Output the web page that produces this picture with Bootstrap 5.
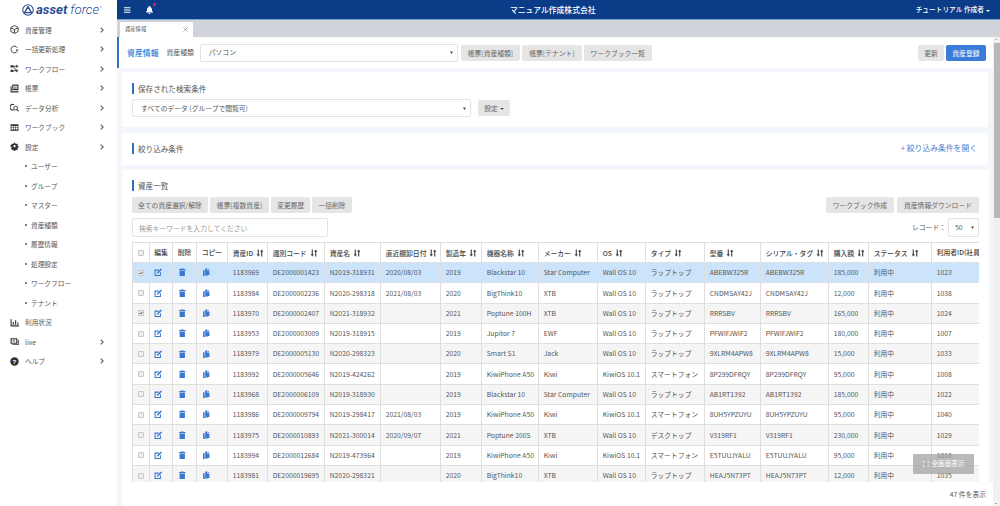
<!DOCTYPE html>
<html lang="ja">
<head>
<meta charset="utf-8">
<title>資産情報</title>
<link href="https://cdn.jsdelivr.net/npm/bootstrap@5.3.0/dist/css/bootstrap.min.css" rel="stylesheet">
<style>
html,body{height:100%;overflow:hidden}
body{font-family:"Noto Sans CJK JP","Noto Sans",sans-serif;font-size:7px;color:#555;background:#fff}
.app-shell{height:100vh}
.side-pane{width:117px;flex:0 0 117px;background:#fff}
.brand-row{height:20px;padding-left:22px;color:#2b4c94}
.brand-row svg{width:12px;height:12px;margin-right:2px}
.brand-a{font-family:Roboto,sans-serif;font-style:italic;font-weight:700;font-size:13.2px;line-height:20px}
.brand-f{font-family:Roboto,sans-serif;font-style:italic;font-weight:300;font-size:13.2px;line-height:20px;margin-left:3px}
.brand-r{font-size:3px;margin-left:1px;margin-top:-3px}
.side-item{height:19.5px;padding:0 13px 0 10px;color:#555;font-size:6.7px;text-decoration:none}
.side-item .ico{width:9px;height:9px;margin-right:6px;fill:#333;flex:none}
.side-item .chev{width:4px;height:6px;fill:none;stroke:#666;stroke-width:1.2;flex:none}
.side-sub{padding-left:25px}
.side-sub::before{content:"";width:2px;height:2px;border-radius:50%;background:#555;margin-right:4px}
.work-pane,.work-col{min-width:0}
.top-bar{height:20px;flex:none;background:#0b3c87;border-bottom:1px solid #7da3d3;color:#fff;padding:0 10px 0 7px;position:relative}
.top-bar svg{fill:#fff}
.burger{width:6.5px;height:6px;margin-right:15px}
.bell{width:7px;height:8px}
.bell-dot{position:absolute;left:36px;top:3px;width:3px;height:3px;border-radius:50%;background:#e0245e}
.co-name{font-size:7.8px;font-weight:500;position:absolute;left:393px;top:4px}
.who{font-size:6.7px;font-weight:500}
.who::after{content:"";display:inline-block;border:2px solid transparent;border-top-color:#fff;border-bottom:0;margin-left:2px;vertical-align:middle}
.tab-strip{height:17px;flex:none;background:#d0d4da;padding:2px 0 0 3px}
.tab-one{width:73px;height:15px;background:#fff;padding:0 5px;font-size:5.3px;color:#555;border-radius:1px 1px 0 0}
.tab-x{width:5px;height:5px;stroke:#888;stroke-width:.7;fill:none}
.page-bg{background:#f3f6fb;min-height:0}
.page-flow{min-height:0;overflow:hidden}
.head-panel{height:31px;flex:none;background:#fff;border-left:2px solid #2f6fc4;padding:0 7px 0 8px}
.head-title{font-size:7.9px;font-weight:500;color:#2f76d2;margin-right:8px}
.head-label{font-size:6.8px;margin-right:6px}
.card-block{background:#fff;margin:0 5px;padding:0 10px;flex:none}
.save-panel{height:55px;margin-top:4px;padding-top:11px}
.filter-panel{height:32px;margin-top:6px;padding-bottom:2px}
.list-panel{flex:1 1 0;min-height:0;overflow:hidden;padding-top:10px;margin-top:5px;margin-right:4px}
.sec-title{border-left:2px solid #2f6fc4;padding-left:4px;height:11px;line-height:11px;font-size:7.6px;color:#555}
.btn-run{gap:2px}
.btn-run3{gap:3px}
.grey-btn{background:#e5e5e5;color:#666;font-size:6.8px;height:16px;line-height:16px;padding:0 6px;border:0;border-radius:2px;white-space:nowrap}
.grey-btn:hover{background:#ddd;color:#666}
.wider-btn{padding:0 7px}
.blue-btn{background:#3a7cd8;color:#fff;font-size:6.8px;height:16px;line-height:16px;padding:0 6.5px;border:0;border-radius:2px}
.pick-box{height:18px;min-height:0;font-size:6.8px;color:#555;padding:0 8px;border:1px solid #e4e4e4;border-radius:2px;background-size:7px 7px;background-position:right 2px center;background-image:url("data:image/svg+xml,%3Csvg xmlns='http://www.w3.org/2000/svg' viewBox='0 0 7 7'%3E%3Cpath d='M2 2.500h3L3.500 5z' fill='%23444'/%3E%3C/svg%3E")}
.pick-kind{width:258px;margin-right:3px}
.pick-saved{width:339px;margin-right:7px}
.pick-count{width:31px;height:19px;padding-left:6px}
.gear-btn{width:32px;padding:0}
.gear-btn::after{content:"";display:inline-block;border:2px solid transparent;border-top-color:#555;border-bottom:0;margin-left:2px;vertical-align:middle}
.open-link{font-size:7.8px;color:#4a80cb;text-decoration:none;margin-right:1px}
.select-row{margin-top:5px}
.tool-row{margin-top:6px;margin-bottom:5px}
.key-box{width:196px;height:19px;min-height:0;font-size:6.8px;padding:0 6px;border:1px solid #e4e4e4;border-radius:2px}
.key-box::placeholder{color:#999}
.rec-label{font-size:6.8px;margin-right:2px}
.grid-wrap{overflow:hidden;margin-top:5px}
.asset-grid{table-layout:fixed;width:890px;margin:0;font-size:6.8px;--bs-table-striped-bg:#f5f5f5;--bs-table-border-color:#dfdfdf;--bs-table-color:#555;--bs-table-striped-color:#555;border-collapse:collapse}
.asset-grid th,.asset-grid td{padding:0 4.7px;height:20.3px;line-height:1;vertical-align:middle;white-space:nowrap;overflow:hidden;color:#555;border-color:#dfdfdf}
.asset-grid th{font-weight:500;color:#444;height:20px}
.asset-grid col:nth-child(1){width:16.5px}
.asset-grid col:nth-child(2){width:23.5px}
.asset-grid col:nth-child(3){width:24px}
.asset-grid col:nth-child(4){width:31px}
.asset-grid col:nth-child(5){width:40px}
.asset-grid col:nth-child(6){width:57px}
.asset-grid col:nth-child(7){width:56px}
.asset-grid col:nth-child(8){width:60px}
.asset-grid col:nth-child(9){width:41px}
.asset-grid col:nth-child(10){width:57px}
.asset-grid col:nth-child(11){width:59px}
.asset-grid col:nth-child(12){width:48px}
.asset-grid col:nth-child(13){width:59px}
.asset-grid col:nth-child(14){width:56px}
.asset-grid col:nth-child(15){width:68px}
.asset-grid col:nth-child(16){width:40px}
.asset-grid col:nth-child(17){width:63px}
.asset-grid col:nth-child(18){width:91px}
.asset-grid tr.row-picked>td{background:#cbe4fb!important;box-shadow:none!important}
.tick{appearance:none;-webkit-appearance:none;width:6px;height:6px;margin:0 0 0 .5px;display:block;background:#eee;border:.6px solid #c8c8c8;border-radius:1px}
.tick:checked{background:#e8e8e8 url("data:image/svg+xml,%3Csvg xmlns='http://www.w3.org/2000/svg' viewBox='0 0 6 6'%3E%3Cpath d='M1 3l1.500 1.500L5 1.500' fill='none' stroke='%23333' stroke-width='1.200'/%3E%3C/svg%3E") center/100% 100% no-repeat}
.act{width:8.5px;height:8.5px;fill:#3a78d0;display:block}
.sort-ico{width:8px;height:8px;fill:#444;margin-left:3px;vertical-align:-1px}
.foot-line{height:24px;flex:none;background:#fff;margin-left:5px;padding-right:7px;font-size:6.8px}
.fake-scroll{width:7px;flex:none;background:#f1f1f1;position:relative}
.fake-thumb{position:absolute;left:1px;right:0;top:6px;height:175px;background:#b8b8b8}
.arrow-up,.arrow-down{position:absolute;left:2px;border:1.5px solid transparent}
.arrow-up{top:2px;border-bottom-color:#777;border-top:0}
.arrow-down{bottom:2px;border-top-color:#555;border-bottom:0}
.wide-btn{position:absolute;left:913px;top:454px;width:61px;height:20px;background:rgba(160,160,160,.72);color:#fff;font-size:6.6px;border-radius:1px;z-index:5}
.wide-btn svg{width:6px;height:6px;margin-right:3px;stroke:#fff;fill:none;stroke-width:1}
</style>
</head>
<body>
<svg width="0" height="0" class="d-none">
<symbol id="i-edit" viewBox="0 0 16 16"><path d="M1 3h9l-2 2H3v8h8V9l2-2v8H1z"/><path d="M6 8l7-7 2 2-7 7-3 1z"/></symbol>
<symbol id="i-trash" viewBox="0 0 16 16"><path d="M6 1h4l1 1h3v2H2V2h3zM3 5h10v10H3z"/></symbol>
<symbol id="i-copy" viewBox="0 0 16 16"><path d="M6 1h4v4h4v8H6z"/><path d="M11 1l3 3h-3zM2 4h3v10h6v1H2z"/></symbol>
<symbol id="i-sort" viewBox="0 0 14 14"><path d="M3 1h2v8h2L4 13 1 9h2zM9 13h2V5h2l-3-4-3 4h2z"/></symbol>
<symbol id="i-chev" viewBox="0 0 4 6"><path d="M.7.6 3.2 3 .7 5.4"/></symbol>
</svg>
<div class="app-shell d-flex">
  <aside class="side-pane d-flex flex-column">
    <div class="brand-row d-flex align-items-center">
      <svg viewBox="0 0 16 16"><circle cx="8" cy="8" r="7" fill="none" stroke="#2b4c94" stroke-width="1.5"/><path d="M8 3.500 12.500 11.500H3.500z" fill="none" stroke="#2b4c94" stroke-width="1.800" stroke-linejoin="round"/></svg>
      <span class="brand-a">asset</span><span class="brand-f">force</span><span class="brand-r">®</span>
    </div>
    <a class="side-item d-flex align-items-center" href="#"><svg class="ico" viewBox="0 0 16 16"><path d="M8 1l6.500 3.500v7L8 15l-6.500-3.500v-7z" fill="none" stroke="#333" stroke-width="1.600"/><path d="M2 5l6 3 6-3M8 8v6" fill="none" stroke="#333" stroke-width="1.600"/></svg><span class="flex-grow-1">資産管理</span><svg class="chev"><use href="#i-chev"/></svg></a>
    <a class="side-item d-flex align-items-center" href="#"><svg class="ico" viewBox="0 0 16 16"><path d="M13 11A6 6 0 1 1 13 5" fill="none" stroke="#333" stroke-width="1.600"/><path d="M10 8h5l-2.500 3z"/></svg><span class="flex-grow-1">一括更新処理</span><svg class="chev"><use href="#i-chev"/></svg></a>
    <a class="side-item d-flex align-items-center" href="#"><svg class="ico" viewBox="0 0 16 16"><path d="M1 2h5v4H1zM1 10h5v4H1zM11 1l4 3-4 3zM11 9l4 3-4 3z"/><path d="M6 4h5M6 12h5M6 4l5 8" stroke="#333" stroke-width="1.500" fill="none"/></svg><span class="flex-grow-1">ワークフロー</span><svg class="chev"><use href="#i-chev"/></svg></a>
    <a class="side-item d-flex align-items-center" href="#"><svg class="ico" viewBox="0 0 16 16"><path d="M4 1h11v10H4zM6 3v6h7V3zM1 4h2v9h12v2H1z" fill-rule="evenodd"/><path d="M7 5h5v1H7zM7 7h5v1H7z"/></svg><span class="flex-grow-1">帳票</span><svg class="chev"><use href="#i-chev"/></svg></a>
    <a class="side-item d-flex align-items-center" href="#"><svg class="ico" viewBox="0 0 16 16"><path d="M7 3a5 5 0 1 0 0 9" fill="none" stroke="#333" stroke-width="2"/><circle cx="10" cy="9" r="3.300" fill="none" stroke="#333" stroke-width="1.600"/><path d="M12 11.500l3 3" stroke="#333" stroke-width="2"/></svg><span class="flex-grow-1">データ分析</span><svg class="chev"><use href="#i-chev"/></svg></a>
    <a class="side-item d-flex align-items-center" href="#"><svg class="ico" viewBox="0 0 16 16"><path d="M1 2h14v12H1zM2.500 5.500v2h3v-2zM6.500 5.500v2h3v-2zM10.500 5.500v2h3v-2zM2.500 8.500v2h3v-2zM6.500 8.500v2h3v-2zM10.500 8.500v2h3v-2zM2.500 11.500v1.500h3v-1.500zM6.500 11.500v1.500h3v-1.500zM10.500 11.500v1.500h3v-1.500z" fill-rule="evenodd"/></svg><span class="flex-grow-1">ワークブック</span><svg class="chev"><use href="#i-chev"/></svg></a>
    <a class="side-item d-flex align-items-center" href="#"><svg class="ico" viewBox="0 0 16 16"><path d="M6.500 0h3l.5 2.200 1.500.6 1.900-1.200 2.100 2.100-1.200 1.900.6 1.500 2.100.4v3l-2.100.5-.6 1.500 1.200 1.900-2.100 2.100-1.900-1.200-1.500.6-.5 2.100h-3l-.5-2.100-1.500-.6-1.900 1.200L.5 12.300l1.200-1.900-.6-1.500L-1 8.500v-3l2.100-.4.6-1.500L.5 3.700 2.600 1.600l1.900 1.200 1.500-.6zM8 5a2.500 2.500 0 1 0 0 5 2.500 2.500 0 0 0 0-5z" fill-rule="evenodd" transform="translate(1.500 1.200) scale(.82)"/></svg><span class="flex-grow-1">設定</span><svg class="chev"><use href="#i-chev"/></svg></a>
    <a class="side-item side-sub d-flex align-items-center" href="#">ユーザー</a>
    <a class="side-item side-sub d-flex align-items-center" href="#">グループ</a>
    <a class="side-item side-sub d-flex align-items-center" href="#">マスター</a>
    <a class="side-item side-sub d-flex align-items-center" href="#">資産種類</a>
    <a class="side-item side-sub d-flex align-items-center" href="#">履歴情報</a>
    <a class="side-item side-sub d-flex align-items-center" href="#">処理設定</a>
    <a class="side-item side-sub d-flex align-items-center" href="#">ワークフロー</a>
    <a class="side-item side-sub d-flex align-items-center" href="#">テナント</a>
    <a class="side-item d-flex align-items-center" href="#"><svg class="ico" viewBox="0 0 16 16"><path d="M1 2h2v11h13v2H1zM5 7h2v5H5zM9 4h2v8H9zM13 8h2v4h-2z"/></svg><span class="flex-grow-1">利用状況</span></a>
    <a class="side-item d-flex align-items-center" href="#"><svg class="ico" viewBox="0 0 16 16"><path d="M1 2h12v10H1zM3 4v6h8V4zM5 5h4v1H5zM5 7h4v1H5zM14 5h1.500v9H4v-1h10z" fill-rule="evenodd"/></svg><span class="flex-grow-1">live</span><svg class="chev"><use href="#i-chev"/></svg></a>
    <a class="side-item d-flex align-items-center" href="#"><svg class="ico" viewBox="0 0 16 16"><circle cx="8" cy="8" r="7.500"/><text x="8" y="12" text-anchor="middle" font-size="11" font-weight="700" fill="#fff" font-family="Liberation Sans">?</text></svg><span class="flex-grow-1">ヘルプ</span><svg class="chev"><use href="#i-chev"/></svg></a>
  </aside>
  <div class="work-pane flex-grow-1 d-flex flex-column">
    <header class="top-bar d-flex align-items-center">
      <svg class="burger" viewBox="0 0 7 6"><path d="M0 0h7v1H0zM0 2.500h7v1H0zM0 5h7v1H0z"/></svg>
      <svg class="bell" viewBox="0 0 14 16"><path d="M7 0a1.500 1.500 0 0 1 1.500 2C11 2.700 12 5 12 8c0 2 .8 3 2 4v1H0v-1c1.200-1 2-2 2-4 0-3 1-5.300 3.500-6A1.500 1.500 0 0 1 7 0zM5 14h4a2 2 0 0 1-4 0z"/></svg>
      <span class="bell-dot"></span>
      <span class="co-name">マニュアル作成株式会社</span>
      <span class="who ms-auto">チュートリアル 作成者</span>
    </header>
    <div class="tab-strip d-flex">
      <div class="tab-one d-flex align-items-center justify-content-between"><span>資産情報</span><svg class="tab-x" viewBox="0 0 5 5"><path d="M.5.500l4 4M4.500.500l-4 4"/></svg></div>
    </div>
    <div class="page-bg flex-grow-1 d-flex">
      <div class="work-col flex-grow-1 d-flex flex-column">
        <div class="page-flow flex-grow-1 d-flex flex-column">
          <section class="head-panel d-flex align-items-center">
            <span class="head-title">資産情報</span>
            <span class="head-label">資産種類</span>
            <select class="form-select pick-box pick-kind"><option>パソコン</option></select>
            <div class="d-flex btn-run">
              <button class="btn grey-btn wider-btn">帳票[資産種類]</button>
              <button class="btn grey-btn wider-btn">帳票[テナント]</button>
              <button class="btn grey-btn wider-btn">ワークブック一覧</button>
            </div>
            <div class="d-flex btn-run ms-auto">
              <button class="btn grey-btn">更新</button>
              <button class="btn blue-btn">資産登録</button>
            </div>
          </section>
          <section class="card-block save-panel">
            <div class="sec-title">保存された検索条件</div>
            <div class="d-flex align-items-center select-row">
              <select class="form-select pick-box pick-saved"><option>すべてのデータ (グループで閲覧可)</option></select>
              <button class="btn grey-btn gear-btn">設定</button>
            </div>
          </section>
          <section class="card-block filter-panel d-flex align-items-center justify-content-between">
            <div class="sec-title">絞り込み条件</div>
            <a class="open-link" href="#">+ 絞り込み条件を開く</a>
          </section>
          <section class="card-block list-panel">
            <div class="sec-title">資産一覧</div>
            <div class="d-flex tool-row">
              <div class="d-flex btn-run">
                <button class="btn grey-btn">全ての資産選択/解除</button>
                <button class="btn grey-btn wider-btn">帳票[複数資産]</button>
                <button class="btn grey-btn">変更履歴</button>
                <button class="btn grey-btn">一括削除</button>
              </div>
              <div class="d-flex btn-run3 ms-auto">
                <button class="btn grey-btn wider-btn">ワークブック作成</button>
                <button class="btn grey-btn wider-btn">資産情報ダウンロード</button>
              </div>
            </div>
            <div class="d-flex align-items-center justify-content-between">
              <input class="form-control key-box" placeholder="検索キーワードを入力してください">
              <div class="d-flex align-items-center">
                <span class="rec-label">レコード：</span>
                <select class="form-select pick-box pick-count"><option>50</option></select>
              </div>
            </div>
            <div class="grid-wrap">
              <table class="table table-bordered table-striped asset-grid">
                <colgroup><col><col><col><col><col><col><col><col><col><col><col><col><col><col><col><col><col><col></colgroup>
                <thead><tr>
                  <th><input class="tick" type="checkbox"></th><th>編集</th><th>削除</th><th>コピー</th>
                  <th>資産ID<svg class="sort-ico"><use href="#i-sort"/></svg></th><th>識別コード<svg class="sort-ico"><use href="#i-sort"/></svg></th><th>資産名<svg class="sort-ico"><use href="#i-sort"/></svg></th><th>直近棚卸日付<svg class="sort-ico"><use href="#i-sort"/></svg></th><th>製造年<svg class="sort-ico"><use href="#i-sort"/></svg></th><th>機器名称<svg class="sort-ico"><use href="#i-sort"/></svg></th><th>メーカー<svg class="sort-ico"><use href="#i-sort"/></svg></th><th>OS<svg class="sort-ico"><use href="#i-sort"/></svg></th><th>タイプ<svg class="sort-ico"><use href="#i-sort"/></svg></th><th>型番<svg class="sort-ico"><use href="#i-sort"/></svg></th><th>シリアル・タグ<svg class="sort-ico"><use href="#i-sort"/></svg></th><th>購入額<svg class="sort-ico"><use href="#i-sort"/></svg></th><th>ステータス<svg class="sort-ico"><use href="#i-sort"/></svg></th><th>利用者ID(社員番号)</th>
                </tr></thead>
                <tbody>
                  <tr class="row-picked"><td><input class="tick" type="checkbox" checked></td><td><svg class="act"><use href="#i-edit"/></svg></td><td><svg class="act"><use href="#i-trash"/></svg></td><td><svg class="act"><use href="#i-copy"/></svg></td><td>1183969</td><td>DE2000001423</td><td>N2019-318931</td><td>2020/08/03</td><td>2019</td><td>Blackstar 10</td><td>Star Computer</td><td>Wall OS 10</td><td>ラップトップ</td><td>ABEBW325R</td><td>ABEBW325R</td><td>185,000</td><td>利用中</td><td>1023</td></tr>
                  <tr><td><input class="tick" type="checkbox"></td><td><svg class="act"><use href="#i-edit"/></svg></td><td><svg class="act"><use href="#i-trash"/></svg></td><td><svg class="act"><use href="#i-copy"/></svg></td><td>1183984</td><td>DE2000002236</td><td>N2020-298318</td><td>2021/08/03</td><td>2020</td><td>BigThink10</td><td>XTB</td><td>Wall OS 10</td><td>ラップトップ</td><td>CNDMSAY42J</td><td>CNDMSAY42J</td><td>12,000</td><td>利用中</td><td>1038</td></tr>
                  <tr><td><input class="tick" type="checkbox" checked></td><td><svg class="act"><use href="#i-edit"/></svg></td><td><svg class="act"><use href="#i-trash"/></svg></td><td><svg class="act"><use href="#i-copy"/></svg></td><td>1183970</td><td>DE2000002407</td><td>N2021-318932</td><td></td><td>2021</td><td>Poptune 100H</td><td>XTB</td><td>Wall OS 10</td><td>ラップトップ</td><td>RRRSBV</td><td>RRRSBV</td><td>165,000</td><td>利用中</td><td>1024</td></tr>
                  <tr><td><input class="tick" type="checkbox"></td><td><svg class="act"><use href="#i-edit"/></svg></td><td><svg class="act"><use href="#i-trash"/></svg></td><td><svg class="act"><use href="#i-copy"/></svg></td><td>1183953</td><td>DE2000003009</td><td>N2019-318915</td><td></td><td>2019</td><td>Jupitor 7</td><td>EWF</td><td>Wall OS 10</td><td>ラップトップ</td><td>PFWIFJWIF2</td><td>PFWIFJWIF2</td><td>180,000</td><td>利用中</td><td>1007</td></tr>
                  <tr><td><input class="tick" type="checkbox"></td><td><svg class="act"><use href="#i-edit"/></svg></td><td><svg class="act"><use href="#i-trash"/></svg></td><td><svg class="act"><use href="#i-copy"/></svg></td><td>1183979</td><td>DE2000005130</td><td>N2020-298323</td><td></td><td>2020</td><td>Smart S1</td><td>Jack</td><td>Wall OS 10</td><td>ラップトップ</td><td>9XLRM4APW8</td><td>9XLRM4APW8</td><td>15,000</td><td>利用中</td><td>1033</td></tr>
                  <tr><td><input class="tick" type="checkbox"></td><td><svg class="act"><use href="#i-edit"/></svg></td><td><svg class="act"><use href="#i-trash"/></svg></td><td><svg class="act"><use href="#i-copy"/></svg></td><td>1183992</td><td>DE2000005646</td><td>N2019-424262</td><td></td><td>2019</td><td>KiwiPhone A50</td><td>Kiwi</td><td>KiwiOS 10.1</td><td>スマートフォン</td><td>8P299DFRQY</td><td>8P299DFRQY</td><td>95,000</td><td>利用中</td><td>1008</td></tr>
                  <tr><td><input class="tick" type="checkbox"></td><td><svg class="act"><use href="#i-edit"/></svg></td><td><svg class="act"><use href="#i-trash"/></svg></td><td><svg class="act"><use href="#i-copy"/></svg></td><td>1183968</td><td>DE2000006109</td><td>N2019-318930</td><td></td><td>2019</td><td>Blackstar 10</td><td>Star Computer</td><td>Wall OS 10</td><td>ラップトップ</td><td>AB1RT1392</td><td>AB1RT1392</td><td>185,000</td><td>利用中</td><td>1022</td></tr>
                  <tr><td><input class="tick" type="checkbox"></td><td><svg class="act"><use href="#i-edit"/></svg></td><td><svg class="act"><use href="#i-trash"/></svg></td><td><svg class="act"><use href="#i-copy"/></svg></td><td>1183986</td><td>DE2000009794</td><td>N2019-298417</td><td>2021/08/03</td><td>2019</td><td>KiwiPhone A50</td><td>Kiwi</td><td>KiwiOS 10.1</td><td>スマートフォン</td><td>8UH5YPZUYU</td><td>8UH5YPZUYU</td><td>95,000</td><td>利用中</td><td>1040</td></tr>
                  <tr><td><input class="tick" type="checkbox"></td><td><svg class="act"><use href="#i-edit"/></svg></td><td><svg class="act"><use href="#i-trash"/></svg></td><td><svg class="act"><use href="#i-copy"/></svg></td><td>1183975</td><td>DE2000010893</td><td>N2021-300014</td><td>2020/09/07</td><td>2021</td><td>Poptune 200S</td><td>XTB</td><td>Wall OS 10</td><td>デスクトップ</td><td>V319RF1</td><td>V319RF1</td><td>230,000</td><td>利用中</td><td>1029</td></tr>
                  <tr><td><input class="tick" type="checkbox"></td><td><svg class="act"><use href="#i-edit"/></svg></td><td><svg class="act"><use href="#i-trash"/></svg></td><td><svg class="act"><use href="#i-copy"/></svg></td><td>1183994</td><td>DE2000012684</td><td>N2019-473964</td><td></td><td>2019</td><td>KiwiPhone A50</td><td>Kiwi</td><td>KiwiOS 10.1</td><td>スマートフォン</td><td>E5TUUJYALU</td><td>E5TUUJYALU</td><td>95,000</td><td>利用中</td><td>1010</td></tr>
                  <tr><td><input class="tick" type="checkbox"></td><td><svg class="act"><use href="#i-edit"/></svg></td><td><svg class="act"><use href="#i-trash"/></svg></td><td><svg class="act"><use href="#i-copy"/></svg></td><td>1183981</td><td>DE2000019695</td><td>N2020-298321</td><td></td><td>2020</td><td>BigThink10</td><td>XTB</td><td>Wall OS 10</td><td>ラップトップ</td><td>HEAJ5N73PT</td><td>HEAJ5N73PT</td><td>12,000</td><td>利用中</td><td>1035</td></tr>
                </tbody>
              </table>
            </div>
          </section>
        </div>
        <footer class="foot-line d-flex align-items-center justify-content-end">47 件を表示</footer>
      </div>
      <div class="fake-scroll"><span class="arrow-up"></span><span class="fake-thumb"></span><span class="arrow-down"></span></div>
    </div>
  </div>
</div>
<div class="wide-btn d-flex align-items-center justify-content-center"><svg viewBox="0 0 8 8"><path d="M.5 2.500v-2h2M5.500.500h2v2M7.500 5.500v2h-2M2.500 7.500h-2v-2"/></svg>全画面表示</div>
<script src="https://cdn.jsdelivr.net/npm/bootstrap@5.3.0/dist/js/bootstrap.bundle.min.js"></script>
</body>
</html>
